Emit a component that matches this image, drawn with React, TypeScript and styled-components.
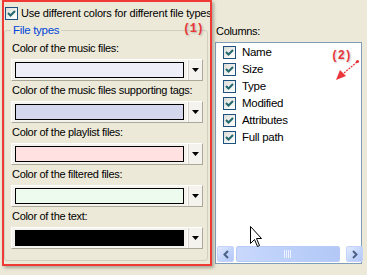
import React from "react";
import styled, { createGlobalStyle } from "styled-components";

const GlobalStyle = createGlobalStyle`
  html, body {
    margin: 0;
    padding: 0;
    background: #ece9d8;
  }
  body {
    font-family: "Liberation Sans", Arial, sans-serif;
    font-size: 11px;
    color: #000;
  }
`;

const Page = styled.div`
  position: relative;
  width: 367px;
  height: 275px;
  overflow: hidden;
  background: #ece9d8;
  display: flex;
  align-items: flex-start;
  padding-left: 2px;
  box-sizing: border-box;
  letter-spacing: -0.3px;
`;

const LeftPanel = styled.div`
  position: relative;
  width: 210px;
  height: 266px;
  box-sizing: border-box;
  border: 2px solid #f03a36;
  box-shadow: 2px 2px 3px rgba(90, 90, 80, 0.45);
  display: flex;
  flex-direction: column;
  overflow: hidden;
`;

const CheckRow = styled.label`
  display: flex;
  align-items: center;
  gap: 3px;
  height: 13px;
  margin: 5px 0 0 1px;
  white-space: nowrap;
  line-height: 13px;
  letter-spacing: -0.2px;
`;

const Box = styled.span`
  flex: none;
  width: 13px;
  height: 13px;
  box-sizing: border-box;
  border: 1px solid #1c5180;
  background: linear-gradient(135deg, #dcdcd7 0%, #fbfbf9 85%);
  display: flex;
  align-items: center;
  justify-content: center;
`;

const Group = styled.fieldset`
  margin: 4px 0 0 0;
  width: 204px;
  height: 237px;
  box-sizing: border-box;
  border: 1px solid #d0d0bf;
  border-radius: 3px;
  padding: 5px 0 0 6px;
  min-width: 0;
`;

const Legend = styled.legend`
  color: #0046d5;
  padding: 0 2px;
  margin-left: 0;
  line-height: 13px;
  font-size: 11.5px;
`;

const FieldLabel = styled.div`
  line-height: 13px;
  height: 13px;
  padding-left: 1px;
  margin-bottom: 4px;
  white-space: nowrap;
`;

const Combo = styled.div`
  display: flex;
  align-items: stretch;
  width: 192px;
  height: 22px;
  box-sizing: border-box;
  border: 1px solid;
  border-color: #ffffff #aca899 #aca899 #ffffff;
  background: #f4f3ee;
  margin-bottom: 3px;
`;

const Swatch = styled.div<{ $color: string }>`
  flex: none;
  width: 169px;
  margin: 2px 0 2px 3px;
  box-sizing: border-box;
  border: 1px solid #000;
  background: ${(p) => p.$color};
`;

const DropButton = styled.div`
  flex: none;
  width: 15px;
  margin-left: 3px;
  box-sizing: border-box;
  border-left: 1px solid #ffffff;
  box-shadow: inset 1px 0 0 #d8d5c6;
  display: flex;
  align-items: center;
  justify-content: center;
`;

const Annotation = styled.span<{ $x: number; $y: number }>`
  position: absolute;
  left: ${(p) => p.$x}px;
  top: ${(p) => p.$y}px;
  font-family: "Liberation Mono", "Courier New", monospace;
  font-weight: bold;
  font-size: 12px;
  letter-spacing: -0.5px;
  color: #e8363a;
  text-shadow: 1px 1px 2px rgba(80, 80, 80, 0.35);
  line-height: 12px;
`;

const RightColumn = styled.div`
  display: flex;
  flex-direction: column;
  margin-left: 3px;
`;

const ColumnsLabel = styled.div`
  margin: 25px 0 4px 1px;
  line-height: 13px;
  height: 13px;
`;

const ListBox = styled.div`
  width: 147px;
  height: 222px;
  box-sizing: border-box;
  border: 1px solid #7f9db9;
  background: #fff;
  display: flex;
  flex-direction: column;
`;

const Items = styled.div`
  flex: 1;
  padding: 1px 0 0 7px;
`;

const Item = styled.div`
  display: flex;
  align-items: center;
  gap: 6px;
  height: 17px;
  line-height: 13px;
  white-space: nowrap;
  font-size: 11.5px;
`;

const HScroll = styled.div`
  flex: none;
  height: 16px;
  display: flex;
  align-items: stretch;
  gap: 1px;
  padding: 0 1px 1px 1px;
  background: #fefefb;
`;

const ScrollBtn = styled.div`
  flex: none;
  width: 17px;
  box-sizing: border-box;
  border: 1px solid #c3d3fd;
  border-radius: 2px;
  background: linear-gradient(135deg, #e2eafe 0%, #c1d3fb 60%, #b4c8f6 100%);
  display: flex;
  align-items: center;
  justify-content: center;
`;

const Track = styled.div`
  flex: 1;
  display: flex;
  padding: 0 5px 0 1px;
`;

const Thumb = styled.div`
  flex: none;
  width: 104px;
  box-sizing: border-box;
  border: 1px solid #b8cbf6;
  border-radius: 2px;
  background: linear-gradient(90deg, #c9d8fc 0%, #bcd0fa 50%, #b3c8f6 100%);
  display: flex;
  align-items: center;
  justify-content: center;
`;

const Check = () => (
  <Box>
    <svg width="9" height="9" viewBox="0 0 9 9">
      <path d="M1 4 L3.5 6.5 L8 2" fill="none" stroke="#21686e" strokeWidth="2" />
    </svg>
  </Box>
);

const DownArrow = () => (
  <svg width="7" height="4" viewBox="0 0 7 4">
    <polygon points="0,0 7,0 3.5,4" fill="#000" />
  </svg>
);

const Chevron = ({ left }: { left?: boolean }) => (
  <svg width="6" height="9" viewBox="0 0 6 9">
    <path
      d={left ? "M5 1 L1.5 4.5 L5 8" : "M1 1 L4.5 4.5 L1 8"}
      fill="none"
      stroke="#4d6185"
      strokeWidth="2"
    />
  </svg>
);

const Grip = () => (
  <svg width="8" height="8" viewBox="0 0 8 8">
    {[0, 2, 4, 6].map((x) => (
      <line key={x} x1={x + 0.5} y1="0" x2={x + 0.5} y2="8" stroke="#eef3fe" strokeWidth="1" />
    ))}
  </svg>
);

const colorFields = [
  { label: "Color of the music files:", color: "#eeeef9" },
  { label: "Color of the music files supporting tags:", color: "#d5d8ed" },
  { label: "Color of the playlist files:", color: "#ffe1e1" },
  { label: "Color of the filtered files:", color: "#ecfbee" },
  { label: "Color of the text:", color: "#000000" },
];

const columns = ["Name", "Size", "Type", "Modified", "Attributes", "Full path"];

const Overlay = styled.svg`
  position: absolute;
  left: 0;
  top: 0;
  pointer-events: none;
`;

export default function App() {
  return (
    <>
      <GlobalStyle />
      <Page>
        <LeftPanel>
          <CheckRow>
            <Check />
            <span>Use different colors for different file types</span>
          </CheckRow>
          <Group>
            <Legend>File types</Legend>
            {colorFields.map((f) => (
              <div key={f.label}>
                <FieldLabel>{f.label}</FieldLabel>
                <Combo>
                  <Swatch $color={f.color} />
                  <DropButton>
                    <DownArrow />
                  </DropButton>
                </Combo>
              </div>
            ))}
          </Group>
        </LeftPanel>
        <RightColumn>
          <ColumnsLabel>Columns:</ColumnsLabel>
          <ListBox>
            <Items>
              {columns.map((c) => (
                <Item key={c}>
                  <Check />
                  <span>{c}</span>
                </Item>
              ))}
            </Items>
            <HScroll>
              <ScrollBtn>
                <Chevron left />
              </ScrollBtn>
              <Track>
                <Thumb>
                  <Grip />
                </Thumb>
              </Track>
              <ScrollBtn>
                <Chevron />
              </ScrollBtn>
            </HScroll>
          </ListBox>
        </RightColumn>
        <Annotation $x={183} $y={23}>(1)</Annotation>
        <Annotation $x={331} $y={50}>(2)</Annotation>
        <Overlay width="367" height="275">
          <line x1="357" y1="62" x2="344" y2="73" stroke="#e8363a" strokeWidth="1.2" strokeDasharray="2 1" />
          <circle cx="357.5" cy="61.5" r="1.6" fill="#e8363a" />
          <polygon points="336,80 340,70 346,76" fill="#e8363a" />
          <path
            d="M250.5 226.5 L250.5 243.5 L254.5 239.5 L257.5 246.5 L259.5 245.5 L256.5 238.5 L261.5 238.5 Z"
            fill="#fff"
            stroke="#000"
            strokeWidth="1"
          />
        </Overlay>
      </Page>
    </>
  );
}
